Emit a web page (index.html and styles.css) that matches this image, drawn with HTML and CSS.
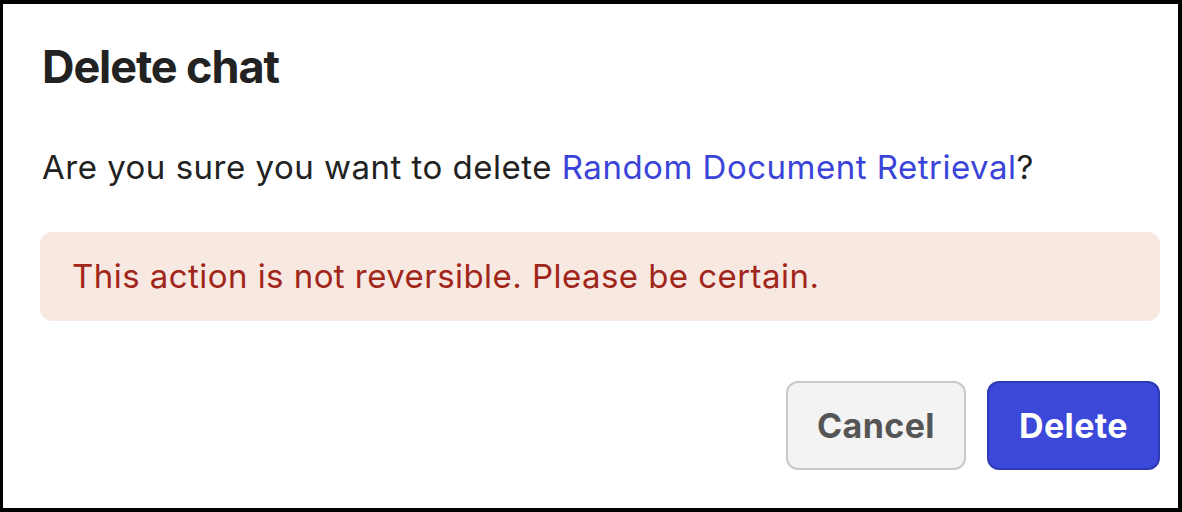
FILE: index.html
```html
<!DOCTYPE html>
<html>
<head>
<meta charset="utf-8">
<link rel="stylesheet" href="styles.css">
</head>
<body>
<div class="dialog">
  <h1 class="title">Delete chat</h1>
  <p class="message">Are you sure you want to delete <span class="chat-name">Random Document Retrieval</span>?</p>
  <div class="alert">This action is not reversible. Please be certain.</div>
  <div class="actions">
    <button class="btn btn-cancel">Cancel</button>
    <button class="btn btn-delete">Delete</button>
  </div>
</div>
</body>
</html>
```
FILE: styles.css
```css
html {
  background: #000;
  height: 100%;
}
body {
  margin: 4px 4px 4px 3px;
  background: #fff;
  height: 504px;
  font-family: Inter, "Noto Sans", sans-serif;
  color: #222;
  overflow: hidden;
}
.dialog {
  padding: 36px 18px 38px 37px;
  display: flex;
  flex-direction: column;
}
.title {
  margin: 0;
  font-size: 45px;
  font-weight: 700;
  letter-spacing: -1.1px;
  line-height: 53px;
  color: #222;
  padding-left: 2px;
}
.message {
  margin: 54px 0 0 2px;
  font-size: 33px;
  letter-spacing: 0.5px;
  line-height: 40px;
}
.chat-name {
  color: #3b44d8;
}
.alert {
  margin-top: 45px;
  background: #f8e8e2;
  color: #a1261a;
  border-radius: 12px;
  padding: 24px 32px 25px;
  font-size: 33px;
  letter-spacing: 0.45px;
  line-height: 40px;
}
.actions {
  margin-top: 60px;
  display: flex;
  justify-content: flex-end;
  gap: 21px;
}
.btn {
  height: 89px;
  border-radius: 12px;
  font-family: Inter, "Noto Sans", sans-serif;
  font-size: 34px;
  letter-spacing: 0.4px;
  font-weight: 700;
  cursor: pointer;
}
.btn-cancel {
  padding: 0 29px;
  background: #f3f3f3;
  border: 2px solid #c9c9c9;
  color: #555;
}
.btn-delete {
  padding: 0 30px;
  background: #3b48d9;
  border: 2px solid #2e3ab3;
  color: #fff;
}
```
